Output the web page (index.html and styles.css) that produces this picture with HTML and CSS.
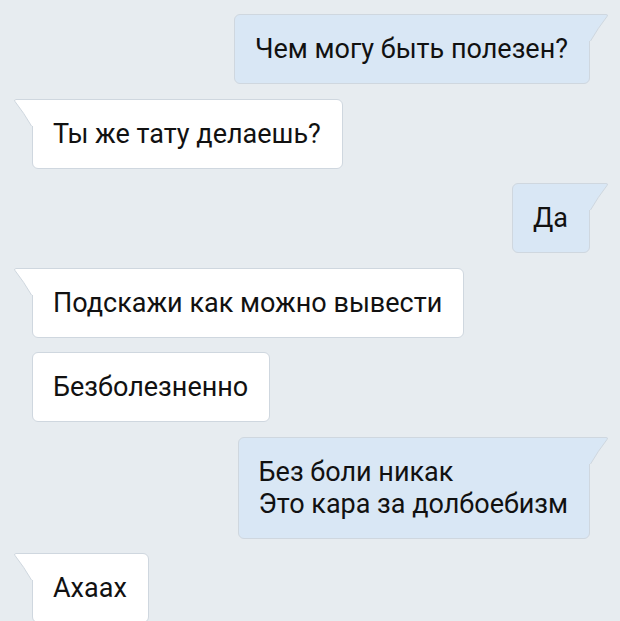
FILE: index.html
```html
<!DOCTYPE html>
<html lang="ru">
<head>
<meta charset="UTF-8">
<meta name="viewport" content="width=device-width, initial-scale=1.0">
<title>Диалог</title>
<link rel="stylesheet" href="styles.css">
</head>
<body>

<div class="chat">

  <div class="msg out tail">
    Чем могу быть полезен?
    <svg class="tailIcon" width="20" height="28" viewBox="0 0 20 28"><path class="tailFill" d="M0 0 H17 Q19.5 0 18 2.5 Q9 14 1.5 27 H0 Z"/><path class="tailLine" d="M0 0.5 H17 Q19.5 0.5 18 2.5 Q9 14 1.5 27"/></svg>
  </div>

  <div class="msg in tail">
    Ты же тату делаешь?
    <svg class="tailIcon" width="20" height="28" viewBox="0 0 20 28"><path class="tailFill" d="M0 0 H17 Q19.5 0 18 2.5 Q9 14 1.5 27 H0 Z"/><path class="tailLine" d="M0 0.5 H17 Q19.5 0.5 18 2.5 Q9 14 1.5 27"/></svg>
  </div>

  <div class="msg out tail">
    Да
    <svg class="tailIcon" width="20" height="28" viewBox="0 0 20 28"><path class="tailFill" d="M0 0 H17 Q19.5 0 18 2.5 Q9 14 1.5 27 H0 Z"/><path class="tailLine" d="M0 0.5 H17 Q19.5 0.5 18 2.5 Q9 14 1.5 27"/></svg>
  </div>

  <div class="msg in tail">
    Подскажи как можно вывести
    <svg class="tailIcon" width="20" height="28" viewBox="0 0 20 28"><path class="tailFill" d="M0 0 H17 Q19.5 0 18 2.5 Q9 14 1.5 27 H0 Z"/><path class="tailLine" d="M0 0.5 H17 Q19.5 0.5 18 2.5 Q9 14 1.5 27"/></svg>
  </div>

  <div class="msg in">
    Безболезненно
  </div>

  <div class="msg out tail">
    Без боли никак<br>
    Это кара за долбоебизм
    <svg class="tailIcon" width="20" height="28" viewBox="0 0 20 28"><path class="tailFill" d="M0 0 H17 Q19.5 0 18 2.5 Q9 14 1.5 27 H0 Z"/><path class="tailLine" d="M0 0.5 H17 Q19.5 0.5 18 2.5 Q9 14 1.5 27"/></svg>
  </div>

  <div class="msg in tail">
    Ахаах
    <svg class="tailIcon" width="20" height="28" viewBox="0 0 20 28"><path class="tailFill" d="M0 0 H17 Q19.5 0 18 2.5 Q9 14 1.5 27 H0 Z"/><path class="tailLine" d="M0 0.5 H17 Q19.5 0.5 18 2.5 Q9 14 1.5 27"/></svg>
  </div>

</div>

</body>
</html>
```

FILE: styles.css
```css
body {
  margin: 0;
  background-color: #e7ecf0;
  font-family: Roboto, "Noto Sans", "DejaVu Sans", sans-serif;
  color: #111111;
  overflow: hidden;
}

.chat {
  display: flex;
  flex-direction: column;
  gap: 14.5px;
  padding: 14px 30px 0 32px;
}

.msg {
  position: relative;
  padding: 18px 21px 18px 20px;
  font-size: 27px;
  line-height: 32px;
  border: 1px solid #cfd7df;
  border-radius: 6px;
  white-space: nowrap;
}

.msg.in {
  align-self: flex-start;
  background-color: #ffffff;
}

.msg.out {
  align-self: flex-end;
  background-color: #d9e7f5;
}

.msg.out.tail {
  border-top-right-radius: 0;
}

.msg.in.tail {
  border-top-left-radius: 0;
}

.tailIcon {
  position: absolute;
  top: -1px;
}

.out .tailIcon {
  left: 100%;
}

.in .tailIcon {
  right: 100%;
  transform: scaleX(-1);
}

.tailLine {
  fill: none;
  stroke: #cfd7df;
  stroke-width: 1;
}

.out .tailFill {
  fill: #d9e7f5;
}

.in .tailFill {
  fill: #ffffff;
}
```
